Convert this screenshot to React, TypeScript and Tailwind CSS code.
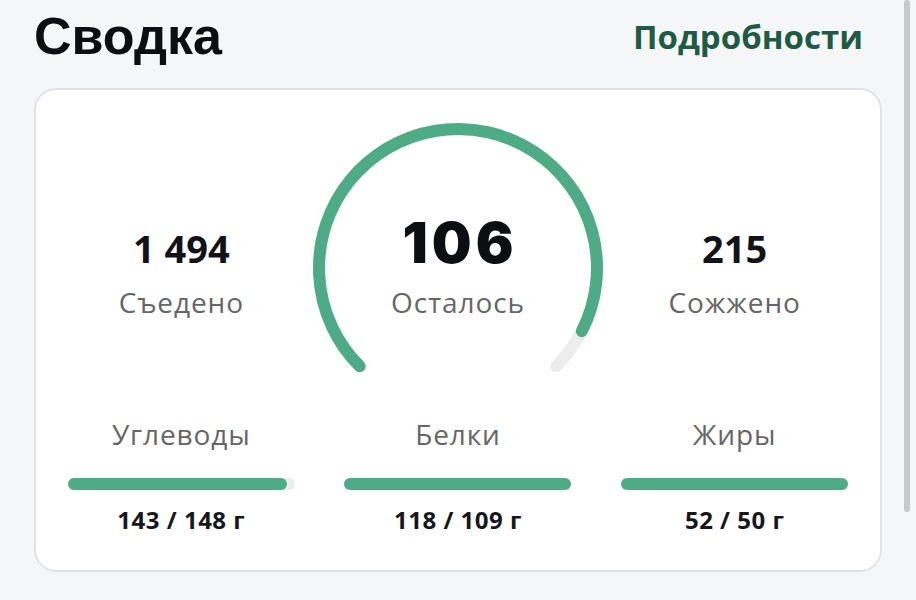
import React from "react";

const GREEN = "#4dab86";

function Gauge() {
  return (
    <svg width="300" height="300" viewBox="0 0 300 300" className="block">
      <path
        d="M 51.71 248.29 A 139 139 0 1 1 248.29 248.29"
        fill="none"
        stroke="#ededed"
        strokeWidth="12"
        strokeLinecap="round"
      />
      <path
        d="M 51.71 248.29 A 139 139 0 1 1 273.85 213.11"
        fill="none"
        stroke={GREEN}
        strokeWidth="12"
        strokeLinecap="round"
      />
    </svg>
  );
}

function Macro({ name, value, pct }: { name: string; value: string; pct: number }) {
  return (
    <div className="flex flex-col items-center">
      <div className="text-[28px] leading-none tracking-[0.9px] text-[#666666]">{name}</div>
      <div className="mt-[30px] h-[12px] w-[227px] rounded-full bg-[#ededed]">
        <div className="h-full rounded-full bg-[#4dab86]" style={{ width: `${pct}%` }} />
      </div>
      <div className="mt-[18px] text-[24px] font-bold leading-none tracking-[0.5px] text-[#15171c]">{value}</div>
    </div>
  );
}

export default function App() {
  return (
    <div
      className="relative h-[600px] w-[916px] overflow-hidden bg-[#f5f6f8]"
      style={{ fontFamily: '"Open Sans", "Noto Sans", sans-serif' }}
    >
      <div className="flex h-[50px] items-center justify-between pl-[34px] pr-[53px] mt-[11px]">
        <div
          className="text-[52px] font-bold leading-none text-[#0d0e12]"
          style={{ fontFamily: '"Liberation Sans", Arial, sans-serif' }}
        >
          Сводка
        </div>
        <div className="text-[33px] font-bold leading-none text-[#1f5b44]">Подробности</div>
      </div>

      <div className="mx-[34px] mt-[27px] rounded-[22px] border-[2.5px] border-[#e0e2e5] bg-white px-[7px] pb-[38px]">
        <div className="relative">
          <div className="pointer-events-none absolute left-1/2 top-[28px] -translate-x-1/2">
            <Gauge />
          </div>
          <div className="relative grid grid-cols-3 items-baseline gap-y-[17px] pt-[125px] text-center">
            <div className="text-[38px] font-bold leading-none text-[#111318]">1 494</div>
            <div
              className="pl-[4px] text-[56px] font-black leading-none tracking-[4px] text-[#0d0e12]"
              style={{ fontFamily: 'Inter, "Open Sans", sans-serif' }}
            >
              106
            </div>
            <div className="text-[38px] font-bold leading-none text-[#111318]">215</div>
            <div className="text-[28px] leading-none tracking-[0.9px] text-[#666666]">Съедено</div>
            <div className="text-[28px] leading-none tracking-[0.9px] text-[#666666]">Осталось</div>
            <div className="text-[28px] leading-none tracking-[0.9px] text-[#666666]">Сожжено</div>
          </div>
        </div>
        <div className="mt-[104px] grid grid-cols-3">
          <Macro name="Углеводы" value="143 / 148 г" pct={96.5} />
          <Macro name="Белки" value="118 / 109 г" pct={100} />
          <Macro name="Жиры" value="52 / 50 г" pct={100} />
        </div>
      </div>

      <div className="absolute right-[6px] top-0 h-[512px] w-[6px] rounded-full bg-[#c8c9cc]" />
    </div>
  );
}
